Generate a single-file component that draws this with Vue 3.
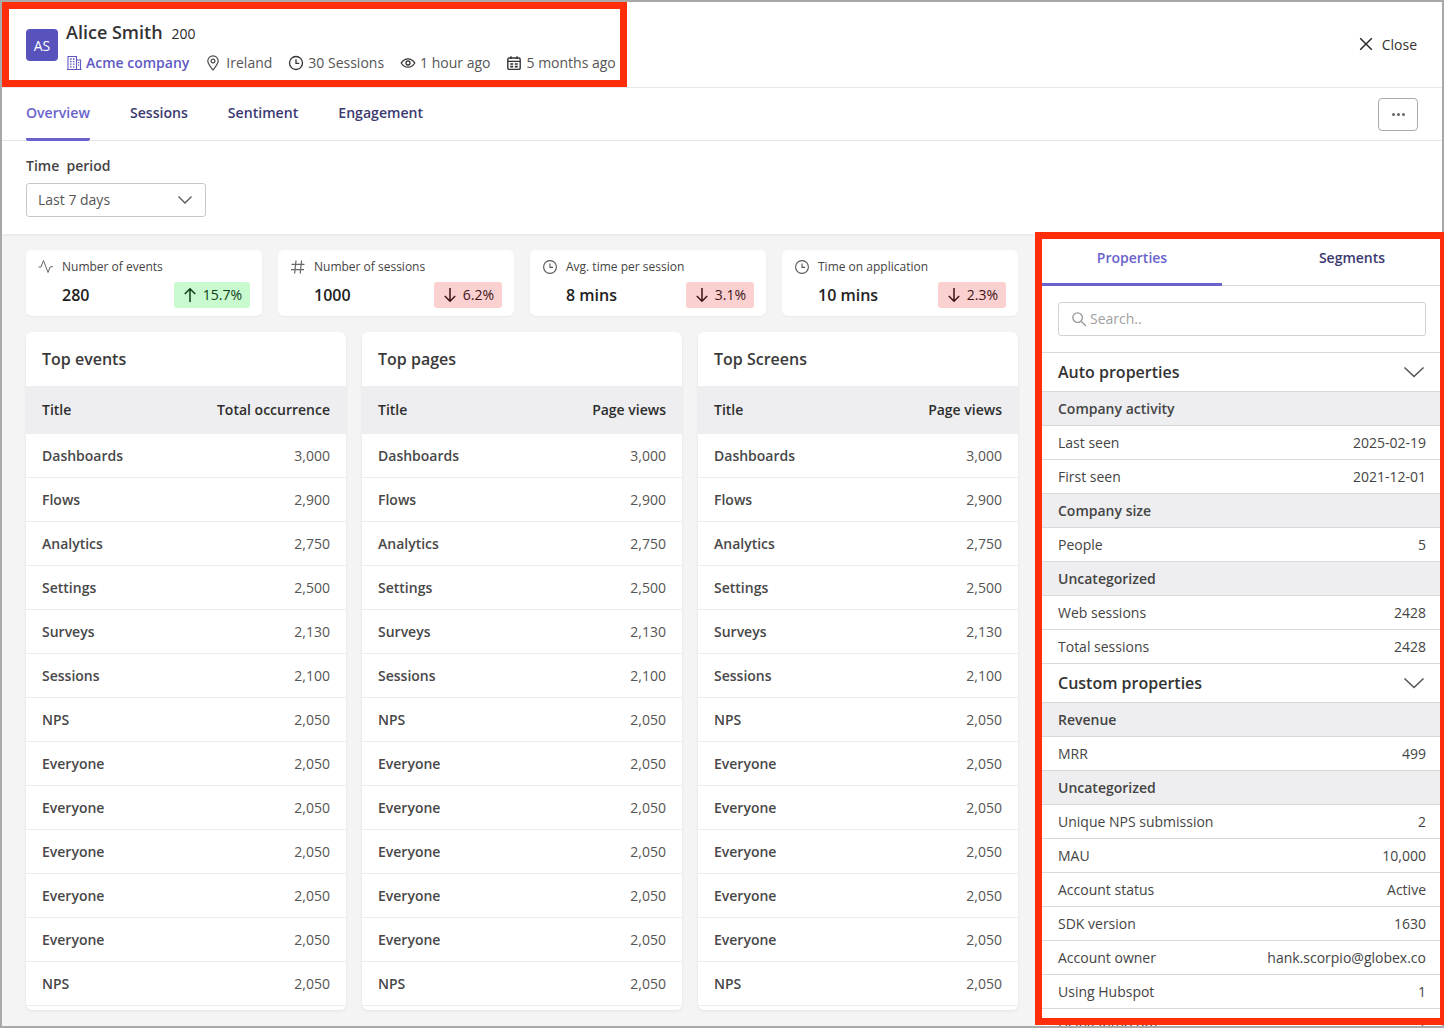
<template>
  <div class="page">
    <!-- header -->
    <header class="head">
      <div class="who">
        <div class="avatar">AS</div>
        <div class="who-text">
          <div class="name-line">
            <span class="name">Alice Smith</span>
            <span class="num">200</span>
          </div>
          <div class="meta">
            <span class="meta-item company">
              <svg width="16" height="16" viewBox="0 0 16 16" fill="none" stroke="currentColor" stroke-width="1.1">
                <path d="M2 14.5V1.5H10.5V14.5M10.5 5H14.5V14.5M1 14.5H15.5" />
                <path d="M4 4H5.6M6.9 4H8.5M4 6.6H5.6M6.9 6.6H8.5M4 9.2H5.6M6.9 9.2H8.5M4 11.8H5.6M6.9 11.8H8.5M12 7.6H13.2M12 10.2H13.2" stroke-width="1.3" />
              </svg>
              Acme company
            </span>
            <span class="meta-item place">
              <svg width="16" height="16" viewBox="0 0 16 16" fill="none" stroke="#4a4a4a" stroke-width="1.2">
                <path d="M8 15C5.5 11.8 2.8 9 2.8 6.1A5.2 5.2 0 0 1 13.2 6.1C13.2 9 10.5 11.8 8 15Z" />
                <circle cx="8" cy="6" r="1.9" />
              </svg>
              Ireland
            </span>
            <span class="meta-item">
              <svg width="16" height="16" viewBox="0 0 16 16" fill="none" stroke="#333" stroke-width="1.3">
                <circle cx="8" cy="8" r="6.5" />
                <path d="M8 4.2V8.4H11.2" />
              </svg>
              30 Sessions
            </span>
            <span class="meta-item">
              <svg width="16" height="16" viewBox="0 0 16 16" fill="none" stroke="#333" stroke-width="1.3">
                <path d="M1.2 8C3 5.2 5.3 3.8 8 3.8S13 5.2 14.8 8C13 10.8 10.7 12.2 8 12.2S3 10.8 1.2 8Z" />
                <circle cx="8" cy="8" r="2" />
              </svg>
              1 hour ago
            </span>
            <span class="meta-item">
              <svg width="16" height="16" viewBox="0 0 16 16" fill="none" stroke="#333" stroke-width="1.4">
                <rect x="1.8" y="3" width="12.4" height="11.4" rx="1.5" />
                <path d="M1.8 6.4H14.2M5 1.2V4M11 1.2V4" />
                <path d="M4.2 9H7.2M8.8 9H11.8M4.2 11.6H7.2M8.8 11.6H11.8" stroke-width="1.6" />
              </svg>
              5 months ago
            </span>
          </div>
        </div>
      </div>
      <div class="close">
        <svg width="14" height="14" viewBox="0 0 14 14" fill="none" stroke="#222" stroke-width="1.4">
          <path d="M1.2 1.2L12.8 12.8M12.8 1.2L1.2 12.8" />
        </svg>
        Close
      </div>
    </header>

    <!-- tabs -->
    <nav class="tabs">
      <a v-for="(t, i) in tabs" :key="t" class="tab" :class="{ active: i === 0 }">{{ t }}</a>
      <button class="more"><span></span><span></span><span></span></button>
    </nav>

    <section class="period">
      <div class="period-label">Time&nbsp; period</div>
      <div class="select">
        Last 7 days
        <svg width="16" height="10" viewBox="0 0 16 10" fill="none" stroke="#555" stroke-width="1.3">
          <path d="M1.5 1.5L8 8L14.5 1.5" />
        </svg>
      </div>
    </section>

    <div class="body">
      <main class="main">
        <div class="stats">
          <div v-for="s in stats" :key="s.label" class="stat">
            <div class="stat-top">
              <svg v-if="s.icon === 'pulse'" class="stat-icon" width="16" height="16" viewBox="0 0 16 16" fill="none" stroke="#666" stroke-width="1">
                <path d="M.5 8L3 8L5.5 1.5L10 13.5L12 8L15 7.5" />
              </svg>
              <svg v-else-if="s.icon === 'hash'" class="stat-icon" width="16" height="16" viewBox="0 0 16 16" fill="none" stroke="#666" stroke-width="1.2">
                <path d="M6 1.5L4.6 14.5M11.6 1.5L10.2 14.5M1.5 5.4H14.5M1 10.6H14" />
              </svg>
              <svg v-else class="stat-icon" width="16" height="16" viewBox="0 0 16 16" fill="none" stroke="#555" stroke-width="1.1">
                <circle cx="8" cy="8" r="6.4" />
                <path d="M8 4.6V8.4H11" />
              </svg>
              <span class="stat-label">{{ s.label }}</span>
            </div>
            <div class="stat-bottom">
              <span class="stat-value">{{ s.value }}</span>
              <span class="delta" :class="s.up ? 'up' : 'down'">
                <svg width="14" height="16" viewBox="0 0 14 16" fill="none" stroke="currentColor" stroke-width="1.5">
                  <path v-if="s.up" d="M7 15V2M1.8 7L7 1.8L12.2 7" />
                  <path v-else d="M7 1V14M1.8 9L7 14.2L12.2 9" />
                </svg>
                <span class="delta-num">{{ s.delta }}</span>
              </span>
            </div>
          </div>
        </div>

        <div class="tables">
          <div v-for="c in cards" :key="c.title" class="card">
            <div class="card-title">{{ c.title }}</div>
            <div class="card-head">
              <span>Title</span>
              <span>{{ c.col }}</span>
            </div>
            <div v-for="(r, i) in rows" :key="i" class="row">
              <span class="row-name">{{ r[0] }}</span>
              <span class="row-num">{{ r[1] }}</span>
            </div>
          </div>
        </div>
      </main>

      <aside class="panel">
        <div class="panel-tabs">
          <a class="ptab active">Properties</a>
          <a class="ptab">Segments</a>
        </div>
        <div class="search-wrap">
          <div class="search">
            <svg width="16" height="16" viewBox="0 0 16 16" fill="none" stroke="#999" stroke-width="1.3">
              <circle cx="6.6" cy="6.6" r="4.8" />
              <path d="M10.2 10.2L15 15" />
            </svg>
            Search..
          </div>
        </div>
        <template v-for="(p, i) in props" :key="i">
          <div v-if="p.section" class="section">
            {{ p.section }}
            <svg width="22" height="12" viewBox="0 0 22 12" fill="none" stroke="#555" stroke-width="1.6">
              <path d="M1.5 1.5L11 10.5L20.5 1.5" />
            </svg>
          </div>
          <div v-else-if="p.group" class="group">{{ p.group }}</div>
          <div v-else class="prop">
            <span>{{ p.k }}</span>
            <span>{{ p.v }}</span>
          </div>
        </template>
      </aside>
    </div>

    <!-- red annotation boxes lying over the page -->
    <div class="mark mark-head"></div>
    <div class="mark mark-panel"></div>
  </div>
</template>

<script setup>
const tabs = ['Overview', 'Sessions', 'Sentiment', 'Engagement']

const stats = [
  { label: 'Number of events', value: '280', delta: '15.7%', up: true, icon: 'pulse' },
  { label: 'Number of sessions', value: '1000', delta: '6.2%', up: false, icon: 'hash' },
  { label: 'Avg. time per session', value: '8 mins', delta: '3.1%', up: false, icon: 'clock' },
  { label: 'Time on application', value: '10 mins', delta: '2.3%', up: false, icon: 'clock' }
]

const cards = [
  { title: 'Top events', col: 'Total occurrence' },
  { title: 'Top pages', col: 'Page views' },
  { title: 'Top Screens', col: 'Page views' }
]

const rows = [
  ['Dashboards', '3,000'],
  ['Flows', '2,900'],
  ['Analytics', '2,750'],
  ['Settings', '2,500'],
  ['Surveys', '2,130'],
  ['Sessions', '2,100'],
  ['NPS', '2,050'],
  ['Everyone', '2,050'],
  ['Everyone', '2,050'],
  ['Everyone', '2,050'],
  ['Everyone', '2,050'],
  ['Everyone', '2,050'],
  ['NPS', '2,050']
]

const props = [
  { section: 'Auto properties' },
  { group: 'Company activity' },
  { k: 'Last seen', v: '2025-02-19' },
  { k: 'First seen', v: '2021-12-01' },
  { group: 'Company size' },
  { k: 'People', v: '5' },
  { group: 'Uncategorized' },
  { k: 'Web sessions', v: '2428' },
  { k: 'Total sessions', v: '2428' },
  { section: 'Custom properties' },
  { group: 'Revenue' },
  { k: 'MRR', v: '499' },
  { group: 'Uncategorized' },
  { k: 'Unique NPS submission', v: '2' },
  { k: 'MAU', v: '10,000' },
  { k: 'Account status', v: 'Active' },
  { k: 'SDK version', v: '1630' },
  { k: 'Account owner', v: 'hank.scorpio@globex.co' },
  { k: 'Using Hubspot', v: '1' },
  { k: 'Using Intercom', v: '1' }
]
</script>

<style scoped>
.page {
  position: relative;
  box-sizing: border-box;
  width: 1444px;
  height: 1028px;
  border: 2px solid #a9a9a9;
  background: #fff;
  font-family: "Open Sans", "Liberation Sans", sans-serif;
  font-size: 14px;
  color: #333;
  display: flex;
  flex-direction: column;
}

.head {
  height: 86px;
  flex: none;
  box-sizing: border-box;
  border-bottom: 1px solid #e8e8e8;
  display: flex;
  justify-content: space-between;
  align-items: center;
  padding: 1px 25px 0 24px;
}

.who {
  display: flex;
  align-items: center;
  gap: 8px;
}

.who-text {
  padding-top: 2px;
}

.avatar {
  width: 32px;
  height: 32px;
  border-radius: 4px;
  background: #5852bd;
  color: #fff;
  display: flex;
  align-items: center;
  justify-content: center;
  font-size: 14px;
}

.name-line {
  display: flex;
  align-items: baseline;
  gap: 9px;
  color: #2a2a2a;
}

.name {
  font-size: 18px;
  font-weight: 600;
  color: #333;
}

.num {
  font-size: 14px;
}

.meta {
  display: flex;
  gap: 16px;
  margin-top: 9px;
  color: #555;
}

.meta-item {
  display: flex;
  align-items: center;
  gap: 4px;
  white-space: nowrap;
}

.place {
  gap: 5px;
}

.company {
  color: #5f59c4;
  font-weight: 600;
}

.close {
  display: flex;
  align-items: center;
  gap: 9px;
  margin-bottom: 2px;
  font-weight: 500;
  color: #333;
}

.tabs {
  height: 53px;
  flex: none;
  box-sizing: border-box;
  border-bottom: 1px solid #e8e8e8;
  display: flex;
  gap: 40px;
  padding: 0 24px;
}

.tab {
  height: 53px;
  box-sizing: border-box;
  padding-top: 15px;
  font-size: 14.1px;
  font-weight: 600;
  color: #3b3a70;
}

.tab.active {
  color: #6a63cc;
  border-bottom: 3px solid #6a63cc;
  border-radius: 0 0 2px 2px;
}

.more {
  margin-left: auto;
  margin-top: 1px;
  align-self: center;
  width: 40px;
  height: 33px;
  box-sizing: border-box;
  border: 1px solid #aaa;
  border-radius: 4px;
  background: #fff;
  display: flex;
  align-items: center;
  justify-content: center;
  gap: 2px;
  padding: 0;
}

.more span {
  width: 3px;
  height: 3px;
  border-radius: 50%;
  background: #666;
}

.period {
  height: 93px;
  flex: none;
  box-sizing: border-box;
  padding: 15px 24px 0;
  box-shadow: 0 1px 3px rgba(0, 0, 0, 0.06);
  position: relative;
}

.period-label {
  color: #444;
  font-weight: 600;
  line-height: 19px;
}

.select {
  margin-top: 8px;
  width: 180px;
  height: 34px;
  box-sizing: border-box;
  border: 1px solid #c8c8c8;
  border-radius: 3px;
  display: flex;
  align-items: center;
  justify-content: space-between;
  padding: 0 12px 1px 11px;
  color: #555;
}

.body {
  flex: 1;
  min-height: 0;
  display: flex;
  overflow: hidden;
  background: #f4f4f4;
}

.main {
  width: 1040px;
  flex: none;
  box-sizing: border-box;
  padding: 16px 24px 0 24px;
}

.stats {
  display: grid;
  grid-template-columns: repeat(4, 236px);
  gap: 16px;
}

.stat {
  height: 66px;
  box-sizing: border-box;
  background: #fff;
  border-radius: 6px;
  box-shadow: 0 1px 2px rgba(0, 0, 0, 0.05);
  padding: 8px 12px;
}

.stat-top {
  display: flex;
  align-items: center;
  gap: 8px;
  height: 17px;
}

.stat-label {
  font-size: 12px;
  color: #444;
}

.stat-bottom {
  display: flex;
  align-items: center;
  justify-content: space-between;
  margin-top: 7px;
  padding-left: 24px;
}

.stat-value {
  font-size: 16px;
  font-weight: 600;
  color: #222;
}

.delta {
  height: 26px;
  box-sizing: border-box;
  border-radius: 3px;
  padding: 0 8px 0 9px;
  display: flex;
  align-items: center;
  gap: 6px;
  font-weight: 500;
}

.delta-num {
  margin-bottom: 2px;
}

.delta.up {
  background: #c9f9cf;
  color: #0d3d17;
}

.delta.down {
  background: #fad0d0;
  color: #3d1518;
}

.tables {
  display: grid;
  grid-template-columns: repeat(3, 320px);
  gap: 16px;
  margin-top: 16px;
}

.card {
  height: 678px;
  overflow: hidden;
  background: #fff;
  border-radius: 6px;
  box-shadow: 0 1px 3px rgba(0, 0, 0, 0.08);
}

.card-title {
  height: 54px;
  display: flex;
  align-items: center;
  padding: 0 16px;
  font-size: 16px;
  font-weight: 600;
  color: #3a3a3a;
}

.card-head {
  height: 48px;
  box-sizing: border-box;
  background: #eeeef0;
  display: flex;
  align-items: center;
  justify-content: space-between;
  padding: 0 16px 2px;
  font-weight: 600;
  color: #2e2e2e;
}

.row {
  height: 44px;
  box-sizing: border-box;
  border-bottom: 1px solid #ececec;
  display: flex;
  align-items: center;
  justify-content: space-between;
  padding: 0 16px;
}

.row-name {
  font-weight: 600;
  color: #484848;
}

.row-num {
  color: #555;
}

.panel {
  flex: 1;
  background: #fff;
  min-width: 0;
  overflow: hidden;
}

.panel-tabs {
  height: 52px;
  box-sizing: border-box;
  border-bottom: 1px solid #d8d8d8;
  display: flex;
  gap: 40px;
}

.ptab {
  flex: 1;
  text-align: center;
  padding-top: 14px;
  box-sizing: border-box;
  height: 52px;
  font-weight: 600;
  color: #3b3a70;
}

.ptab.active {
  color: #6a63cc;
  border-bottom: 3px solid #6a63cc;
}

.search-wrap {
  padding: 16px;
  border-bottom: 1px solid #d8d8d8;
}

.search {
  height: 34px;
  box-sizing: border-box;
  border: 1px solid #d2d2d2;
  border-radius: 3px;
  display: flex;
  align-items: center;
  gap: 3px;
  padding: 0 12px 1px;
  color: #a0a0a0;
}

.section {
  height: 39px;
  box-sizing: border-box;
  border-bottom: 1px solid #d8d8d8;
  display: flex;
  align-items: center;
  justify-content: space-between;
  padding: 0 17px 0 16px;
  font-size: 16px;
  font-weight: 600;
  color: #333;
}

.group {
  height: 34px;
  box-sizing: border-box;
  border-bottom: 1px solid #d8d8d8;
  background: #eeeef0;
  display: flex;
  align-items: center;
  padding: 0 16px;
  font-weight: 600;
  color: #444;
}

.prop {
  height: 34px;
  box-sizing: border-box;
  border-bottom: 1px solid #d8d8d8;
  display: flex;
  align-items: center;
  justify-content: space-between;
  padding: 0 16px;
  color: #444;
}

.mark {
  position: absolute;
  box-sizing: border-box;
  border: 7px solid #ff2d0a;
  pointer-events: none;
}

.mark-head {
  left: 0;
  top: 0;
  width: 625px;
  height: 85px;
}

.mark-panel {
  left: 1033px;
  top: 230px;
  width: 409px;
  height: 793px;
  border-right-width: 4px;
}
</style>
